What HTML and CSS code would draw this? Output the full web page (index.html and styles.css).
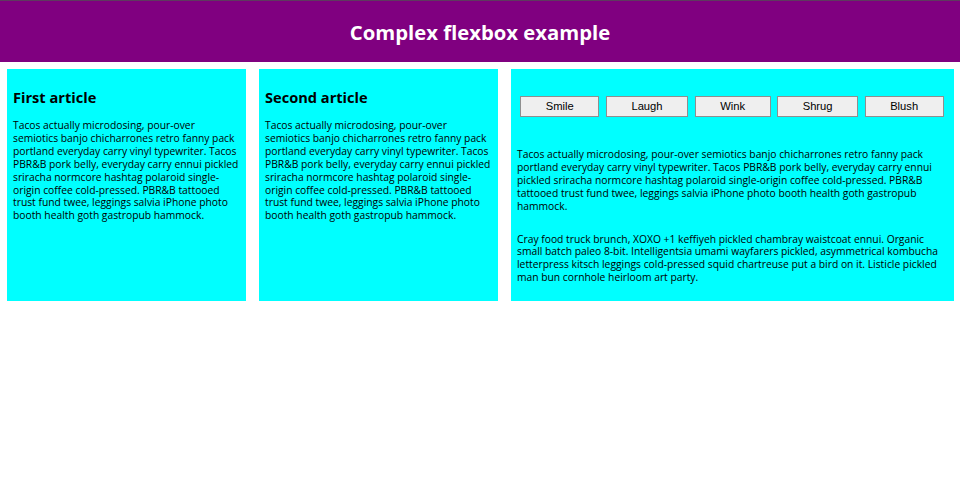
FILE: index.html
```html
<!DOCTYPE html>
<html lang="en">
<head>
<meta charset="utf-8">
<title>Complex flexbox example</title>
<link rel="stylesheet" href="styles.css">
</head>
<body>
<header class="site-header">
  <h1 class="site-title">Complex flexbox example</h1>
</header>
<section class="articles">
  <article class="card">
    <h2 class="card-title">First article</h2>
    <p class="card-text">Tacos actually microdosing, pour-over semiotics banjo chicharrones retro fanny pack portland everyday carry vinyl typewriter. Tacos PBR&amp;B pork belly, everyday carry ennui pickled sriracha normcore hashtag polaroid single-origin coffee cold-pressed. PBR&amp;B tattooed trust fund twee, leggings salvia iPhone photo booth health goth gastropub hammock.</p>
  </article>
  <article class="card">
    <h2 class="card-title">Second article</h2>
    <p class="card-text">Tacos actually microdosing, pour-over semiotics banjo chicharrones retro fanny pack portland everyday carry vinyl typewriter. Tacos PBR&amp;B pork belly, everyday carry ennui pickled sriracha normcore hashtag polaroid single-origin coffee cold-pressed. PBR&amp;B tattooed trust fund twee, leggings salvia iPhone photo booth health goth gastropub hammock.</p>
  </article>
  <article class="card card-wide">
    <div class="button-row">
      <button class="btn">Smile</button>
      <button class="btn">Laugh</button>
      <button class="btn">Wink</button>
      <button class="btn">Shrug</button>
      <button class="btn">Blush</button>
    </div>
    <p class="card-text">Tacos actually microdosing, pour-over semiotics banjo chicharrones retro fanny pack portland everyday carry vinyl typewriter. Tacos PBR&amp;B pork belly, everyday carry ennui pickled sriracha normcore hashtag polaroid single-origin coffee cold-pressed. PBR&amp;B tattooed trust fund twee, leggings salvia iPhone photo booth health goth gastropub hammock.</p>
    <p class="card-text">Cray food truck brunch, XOXO +1 keffiyeh pickled chambray waistcoat ennui. Organic small batch paleo 8-bit. Intelligentsia umami wayfarers pickled, asymmetrical kombucha letterpress kitsch leggings cold-pressed squid chartreuse put a bird on it. Listicle pickled man bun cornhole heirloom art party.</p>
  </article>
</section>
</body>
</html>
```
FILE: styles.css
```css
html {
  font-family: "Open Sans", "Noto Sans", sans-serif;
  font-size: 10.3px;
}
body {
  margin: 0;
  background: #ffffff;
  color: #000000;
}
.site-header {
  background: #800080;
  height: 61px;
  border-top: 1px solid #5e3a5e;
  display: flex;
  align-items: center;
  justify-content: center;
}
.site-title {
  margin: 0;
  color: #ffffff;
  font-size: 20.3px;
  font-weight: 700;
  line-height: 26px;
  padding-top: 1px;
}
.articles {
  display: flex;
  align-items: stretch;
}
.card {
  flex: 1 1 124px;
  margin: 6.5px;
  padding: 6.5px;
  background: #00ffff;
}
.card-wide {
  flex: 3 1 124px;
  display: flex;
  flex-direction: column;
}
.card-title {
  margin: 12px 0;
  font-size: 14.6px;
  font-weight: 700;
  line-height: 20px;
}
.card-text {
  margin: 10px 0;
  line-height: 12.9px;
}
.button-row {
  flex: 1 1 63px;
  display: flex;
  flex-flow: row wrap;
  align-items: center;
  justify-content: space-around;
}
.btn {
  flex: 1 1 auto;
  margin: 3.3px;
  font-family: "Liberation Sans", Arial, sans-serif;
  font-size: 11.2px;
  line-height: 17px;
  padding: 1px 4px;
  background: #efefef;
  color: #000000;
  border: 1px solid #8f8f8f;
  border-radius: 0;
}
```
